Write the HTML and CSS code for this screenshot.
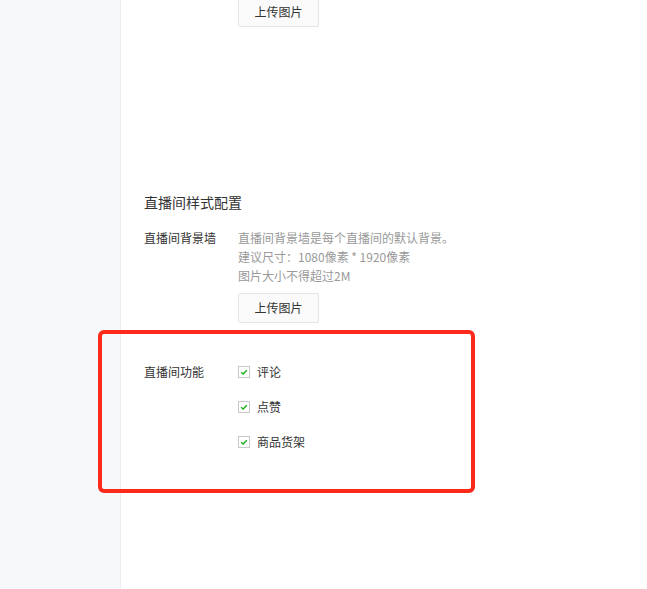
FILE: index.html
```html
<!DOCTYPE html>
<html lang="zh">
<head>
<meta charset="utf-8">
<link rel="stylesheet" href="styles.css">
</head>
<body>
<div class="page">
  <aside class="sidebar"></aside>
  <main class="main">
    <div class="upload-row first">
      <button class="btn">上传图片</button>
    </div>
    <h3 class="section-title">直播间样式配置</h3>
    <div class="form-row">
      <div class="label">直播间背景墙</div>
      <div class="control">
        <p class="desc">直播间背景墙是每个直播间的默认背景。</p>
        <p class="desc">建议尺寸：1080像素 * 1920像素</p>
        <p class="desc">图片大小不得超过2M</p>
        <button class="btn btn-gap">上传图片</button>
      </div>
    </div>
    <div class="form-row func">
      <div class="label">直播间功能</div>
      <div class="control checks">
        <label class="check"><span class="box"><svg viewBox="0 0 12 12" width="12" height="12"><path d="M2.6 6.2 L5 8.4 L9.4 3.8" fill="none" stroke="#1aad19" stroke-width="1.7"/></svg></span>评论</label>
        <label class="check"><span class="box"><svg viewBox="0 0 12 12" width="12" height="12"><path d="M2.6 6.2 L5 8.4 L9.4 3.8" fill="none" stroke="#1aad19" stroke-width="1.7"/></svg></span>点赞</label>
        <label class="check"><span class="box"><svg viewBox="0 0 12 12" width="12" height="12"><path d="M2.6 6.2 L5 8.4 L9.4 3.8" fill="none" stroke="#1aad19" stroke-width="1.7"/></svg></span>商品货架</label>
      </div>
    </div>
  </main>
  <div class="highlight"></div>
</div>
</body>
</html>
```
FILE: styles.css
```css
* { box-sizing: border-box; }
html, body { margin: 0; padding: 0; }
body {
  font-family: "Noto Sans CJK SC", "Liberation Sans", sans-serif;
  color: #333;
  background: #fff;
  overflow: hidden;
}
.page {
  position: relative;
  display: flex;
  height: 589px;
}
.sidebar {
  width: 121px;
  flex: none;
  background: #f7f8fa;
  border-right: 1px solid #ebedf0;
}
.main {
  flex: 1;
  padding-left: 23px;
}
.upload-row.first {
  padding-left: 94px;
  margin-top: -3px;
}
.btn {
  display: block;
  height: 30px;
  width: 81px;
  padding: 0;
  border: 1px solid #e5e5e5;
  border-radius: 2px;
  background: #fafafa;
  font-family: inherit;
  font-size: 12px;
  color: #333;
  line-height: 28px;
}
.section-title {
  margin: 165px 0 0;
  font-size: 14px;
  font-weight: normal;
  line-height: 20px;
  color: #333;
}
.form-row {
  display: flex;
  margin-top: 16px;
  font-size: 12px;
  line-height: 19px;
}
.label {
  width: 94px;
  flex: none;
  color: #333;
}
.desc {
  margin: 0;
  color: #999;
}
.desc-latin { font-family: "Liberation Sans", "Noto Sans CJK SC", sans-serif; }
.btn-gap { margin-top: 8px; }
.form-row.func { margin-top: 39px; }
.checks {
  display: flex;
  flex-direction: column;
}
.check {
  display: flex;
  align-items: center;
  height: 19px;
  margin-bottom: 16px;
  color: #333;
}
.box {
  width: 12px;
  height: 12px;
  border: 1px solid #c8c8c8;
  background: #fff;
  margin-right: 7px;
  display: flex;
  align-items: center;
  justify-content: center;
}
.box svg { display: block; width: 10px; height: 10px; }
.highlight {
  position: absolute;
  left: 98px;
  top: 330px;
  width: 377px;
  height: 163px;
  border: 4px solid #fd2a1c;
  border-radius: 6px;
}
```
